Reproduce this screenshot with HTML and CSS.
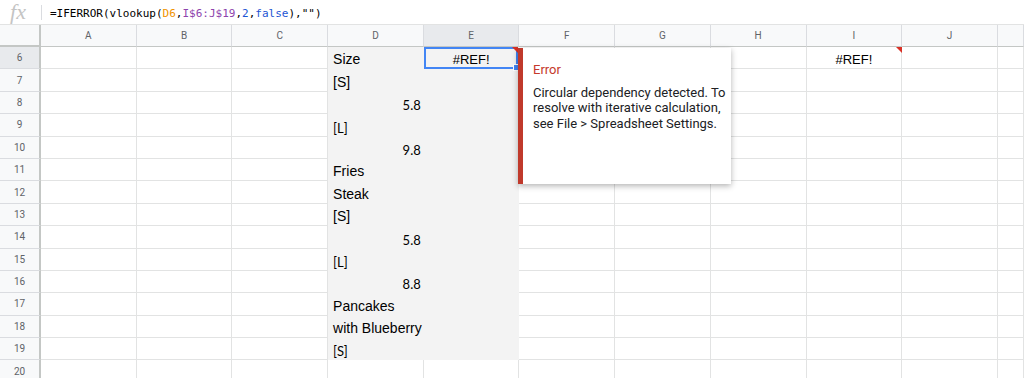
FILE: index.html
```html
<!DOCTYPE html>
<html>
<head>
    <meta name="viewport" content="width=device-width, initial-scale=1.0">
    <title>Sheet</title>
    <link rel="stylesheet" href="styles.css">
</head>
<body>
    <div class="formula">
        <span class="fx">fx</span>
        <span class="sep"></span>
        <span class="expr">=IFERROR(vlookup(<span class="ref-d">D6</span>,<span class="ref-i">I$6:J$19</span>,<span class="lit">2</span>,<span class="lit">false</span>),"")</span>
    </div>

    <div class="sheet" id="sheet">
        <div class="block">
            <div class="d">Size</div><div class="e sel">#REF!</div>
            <div class="d">[S]</div><div class="e"></div>
            <div class="d small num">5.8</div><div class="e"></div>
            <div class="d small">[L]</div><div class="e"></div>
            <div class="d small num">9.8</div><div class="e"></div>
            <div class="d">Fries</div><div class="e"></div>
            <div class="d">Steak</div><div class="e"></div>
            <div class="d">[S]</div><div class="e"></div>
            <div class="d small num">5.8</div><div class="e"></div>
            <div class="d small">[L]</div><div class="e"></div>
            <div class="d small num">8.8</div><div class="e"></div>
            <div class="d">Pancakes</div><div class="e"></div>
            <div class="d">with Blueberry</div><div class="e"></div>
            <div class="d small">[S]</div><div class="e"></div>
        </div>

        <div class="popup">
            <div class="popup-title">Error</div>
            <div class="popup-body">Circular dependency detected. To resolve with iterative calculation, see File &gt; Spreadsheet Settings.</div>
        </div>
    </div>

    <script>
        const sheet = document.getElementById('sheet');
        const cols = ['A', 'B', 'C', 'D', 'E', 'F', 'G', 'H', 'I', 'J', ''];
        const values = { I6: '#REF!' };

        function addCell(cls, text) {
            const div = document.createElement('div');
            div.className = cls;
            div.textContent = text || '';
            sheet.appendChild(div);
            return div;
        }

        addCell('corner');
        cols.forEach(c => addCell('col-head' + (c === 'E' ? ' active' : ''), c));

        for (let r = 6; r <= 20; r++) {
            addCell('row-head' + (r === 6 ? ' active' : ''), r);
            cols.forEach(c => {
                // D6:E19 is drawn by the shaded block
                if ((c === 'D' || c === 'E') && r <= 19) return;
                const cell = addCell('cell', values[c + r]);
                if (c + r === 'I6') cell.classList.add('flag');
            });
        }
    </script>
</body>
</html>
```

FILE: styles.css
```css
body {
    margin: 0;
    font-family: Arial, "Liberation Sans", sans-serif;
    background: white;
    overflow: hidden;
}
.formula {
    height: 25px;
    display: flex;
    align-items: center;
    box-sizing: border-box;
    border-bottom: 1px solid #e2e3e3;
}
.fx {
    width: 36px;
    text-align: center;
    font-family: "Liberation Serif", serif;
    font-style: italic;
    font-size: 22px;
    line-height: 22px;
    color: #c4c4c4;
}
.sep {
    width: 1px;
    height: 15px;
    margin-left: 5px;
    background: #dadce0;
}
.expr {
    margin-left: 8px;
    padding-top: 2px;
    font-family: "DejaVu Sans Mono", monospace;
    font-size: 11px;
    color: #000;
}
.ref-d { color: #f09300; }
.ref-i { color: #8e44ad; }
.lit { color: #1c55d3; }

.sheet {
    position: relative;
    display: grid;
    grid-template-columns: 41px repeat(10, 95.7px) 1fr;
    grid-template-rows: 22px repeat(15, 22.4px);
}
.corner, .col-head, .row-head, .cell {
    box-sizing: border-box;
    border-right: 1px solid #e2e3e3;
    border-bottom: 1px solid #e2e3e3;
}
.corner {
    background: #f8f9fa;
    border-right: 2px solid #c4c7c5;
    border-bottom: 2px solid #c4c7c5;
}
.col-head, .row-head {
    background: #f8f9fa;
    display: flex;
    align-items: center;
    justify-content: center;
    font-family: Roboto, sans-serif;
    font-size: 10px;
    color: #5f6368;
}
.col-head {
    border-right-color: #dadce0;
    border-bottom: 1px solid #c4c7c5;
}
.row-head {
    border-right: 2px solid #c4c7c5;
    border-bottom-color: #dadce0;
}
.col-head.active, .row-head.active {
    background: #e8eaed;
}
.cell {
    position: relative;
    display: flex;
    align-items: flex-end;
    justify-content: center;
    padding-bottom: 1px;
    font-size: 13px;
    color: #000;
}
.flag::after {
    content: "";
    position: absolute;
    top: 0;
    right: -1px;
    border-top: 6px solid #d93025;
    border-left: 6px solid transparent;
}

.block {
    grid-column: 5 / 7;
    grid-row: 2 / 16;
    background: #f3f3f3;
    display: grid;
    grid-template-columns: 1fr 1fr;
    grid-template-rows: repeat(14, 1fr);
}
.d {
    display: flex;
    align-items: flex-end;
    padding: 0 0 2px 5px;
    font-size: 14px;
    white-space: nowrap;
    color: #000;
}
.d.small {
    font-family: Lato, sans-serif;
    font-size: 13px;
    padding-bottom: 1px;
}
.d.num {
    justify-content: flex-end;
    padding-right: 3px;
}
.e.sel {
    position: relative;
    display: flex;
    align-items: flex-end;
    justify-content: center;
    font-size: 13px;
    border: 2px solid #4285f4;
    margin: 0 1px 0 0;
}
.e.sel::after {
    content: "";
    position: absolute;
    top: -2px;
    right: -2px;
    border-top: 6px solid #d93025;
    border-left: 6px solid transparent;
}
.e.sel::before {
    content: "";
    position: absolute;
    right: -4px;
    bottom: -4px;
    width: 5px;
    height: 5px;
    background: #4285f4;
    border: 1px solid white;
}

.popup {
    position: absolute;
    left: 518px;
    top: 23px;
    width: 198px;
    height: 122px;
    z-index: 2;
    background: white;
    border-left: 5px solid #c0392b;
    box-shadow: 0 2px 6px rgba(0, 0, 0, 0.3);
    padding: 14px 0 0 10px;
    font-family: Roboto, sans-serif;
    font-size: 13px;
    line-height: 15.6px;
    color: #202124;
}
.popup-title {
    color: #c5392b;
    margin-bottom: 7px;
}
.popup-body {
    width: 198px;
}
```
